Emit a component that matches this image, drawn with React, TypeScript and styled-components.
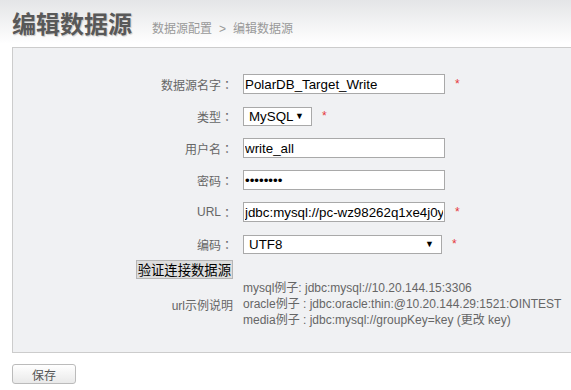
import React from 'react'
import styled, { createGlobalStyle } from 'styled-components'

const GlobalStyle = createGlobalStyle`
  html, body {
    margin: 0;
    padding: 0;
    background: #fff;
    overflow: hidden;
  }
  body {
    font-family: "Liberation Sans", Arial, "Noto Sans CJK SC", sans-serif;
  }
`

interface FieldDef {
  label: string
  kind: 'input' | 'password' | 'select'
  value: string
  width: number
  options?: string[]
  required?: boolean
}

const fields: FieldDef[] = [
  { label: '数据源名字', kind: 'input', value: 'PolarDB_Target_Write', width: 202, required: true },
  { label: '类型', kind: 'select', value: 'MySQL', width: 69, options: ['MySQL', 'Oracle', 'Media'], required: true },
  { label: '用户名', kind: 'input', value: 'write_all', width: 202 },
  { label: '密码', kind: 'password', value: 'password', width: 202 },
  { label: 'URL', kind: 'input', value: 'jdbc:mysql://pc-wz98262q1xe4j0y.rwlb.rds.aliyuncs.com:3306', width: 202, required: true },
  { label: '编码', kind: 'select', value: 'UTF8', width: 199, options: ['UTF8', 'GBK', 'ISO-8859-1'], required: true },
]

const examples = [
  'mysql例子: jdbc:mysql://10.20.144.15:3306',
  'oracle例子 : jdbc:oracle:thin:@10.20.144.29:1521:OINTEST',
  'media例子 : jdbc:mysql://groupKey=key (更改 key)',
]

function App() {
  return (
    <Page>
      <GlobalStyle />
      <Header>
        <Title>编辑数据源</Title>
        <Crumbs>
          数据源配置<Sep>&gt;</Sep>编辑数据源
        </Crumbs>
      </Header>
      <Panel>
        <Form>
          {fields.map((f) => (
            <React.Fragment key={f.label}>
              <Label>
                {f.label}
                <Colon>：</Colon>
              </Label>
              <Control>
                {f.kind === 'select' ? (
                  <SelectWrap $w={f.width}>
                    <Select defaultValue={f.value}>
                      {f.options?.map((o) => (
                        <option key={o}>{o}</option>
                      ))}
                    </Select>
                    <Arrow>▼</Arrow>
                  </SelectWrap>
                ) : (
                  <TextInput
                    type={f.kind === 'password' ? 'password' : 'text'}
                    defaultValue={f.value}
                    $w={f.width}
                  />
                )}
                {f.required && <Star>*</Star>}
              </Control>
            </React.Fragment>
          ))}
          <ButtonCell>
            <CheckBtn>验证连接数据源</CheckBtn>
          </ButtonCell>
          <div />
          <Label>url示例说明</Label>
          <Examples>
            {examples.map((e) => (
              <div key={e}>{e}</div>
            ))}
          </Examples>
        </Form>
      </Panel>
      <SaveBtn>保存</SaveBtn>
    </Page>
  )
}

export default App

const Page = styled.div`
  width: 571px;
  height: 390px;
  background: linear-gradient(#e4e5e7 0px, #ffffff 44px);
`

const Header = styled.div`
  height: 47px;
  box-sizing: border-box;
  padding: 9px 12px 0;
  display: flex;
  align-items: baseline;
  gap: 20px;
`

const Title = styled.h1`
  margin: 0;
  font-size: 24px;
  line-height: 28px;
  font-weight: bold;
  color: #585858;
  text-shadow: 1px 1px 1px #c8c8c8;
  font-family: "Noto Sans CJK SC", sans-serif;
`

const Crumbs = styled.span`
  font-size: 12px;
  color: #999;
  font-family: "Liberation Sans", "Noto Sans CJK SC", sans-serif;
`

const Sep = styled.span`
  margin: 0 7px;
`

const Panel = styled.div`
  margin: 0 -10px 0 12px;
  border: 1px solid #cccccc;
  background: #f0f1f3;
  padding: 20px 0 24px;
`

const Form = styled.div`
  display: grid;
  grid-template-columns: 220px 1fr;
  column-gap: 10px;
`

const Label = styled.div`
  min-height: 32px;
  display: flex;
  align-items: center;
  justify-content: flex-end;
  font-size: 12px;
  color: #666;
`

const Colon = styled.span`
  font-family: "Noto Sans CJK TC", sans-serif;
`

const Control = styled.div`
  height: 32px;
  display: flex;
  align-items: center;
  gap: 10px;
`

const TextInput = styled.input<{ $w: number }>`
  width: ${(p) => p.$w}px;
  height: 20px;
  box-sizing: border-box;
  border: 1px solid #a9a9a9;
  background: #fff;
  padding: 0 1px;
  margin: 0;
  font-size: 13.333px;
  font-family: "Liberation Sans", Arial, sans-serif;
  color: #000;
  outline: none;
`

const SelectWrap = styled.div<{ $w: number }>`
  position: relative;
  width: ${(p) => p.$w}px;
  height: 19px;
`

const Select = styled.select`
  appearance: none;
  width: 100%;
  height: 100%;
  box-sizing: border-box;
  border: 1px solid #a9a9a9;
  border-radius: 0;
  background: #fff;
  padding: 0 0 0 5px;
  margin: 0;
  font-size: 13.333px;
  font-family: "Liberation Sans", Arial, sans-serif;
  color: #000;
  outline: none;
`

const Arrow = styled.span`
  position: absolute;
  right: 8px;
  top: 4px;
  font-size: 9px;
  line-height: 11px;
  color: #000;
  pointer-events: none;
`

const Star = styled.span`
  font-size: 12px;
  color: #e5383b;
`

const ButtonCell = styled.div`
  display: flex;
  justify-content: flex-end;
  height: 20px;
  align-items: flex-start;
`

const CheckBtn = styled.button`
  height: 19px;
  padding: 0 1px;
  margin: 0;
  border: 1px solid #b5b5b5;
  background: #dddddd;
  font-size: 13.333px;
  line-height: 16px;
  color: #000;
  font-family: "Noto Sans CJK SC", sans-serif;
`

const Examples = styled.div`
  font-size: 12px;
  line-height: 16px;
  color: #666;
`

const SaveBtn = styled.button`
  display: block;
  margin: 11px 0 0 12px;
  width: 64px;
  height: 20px;
  border: 1px solid #bbb;
  border-radius: 3px;
  background: linear-gradient(#ffffff, #e9e9e9);
  font-size: 12px;
  color: #555;
  font-family: "Liberation Sans", "Noto Sans CJK SC", sans-serif;
  padding: 0;
`
